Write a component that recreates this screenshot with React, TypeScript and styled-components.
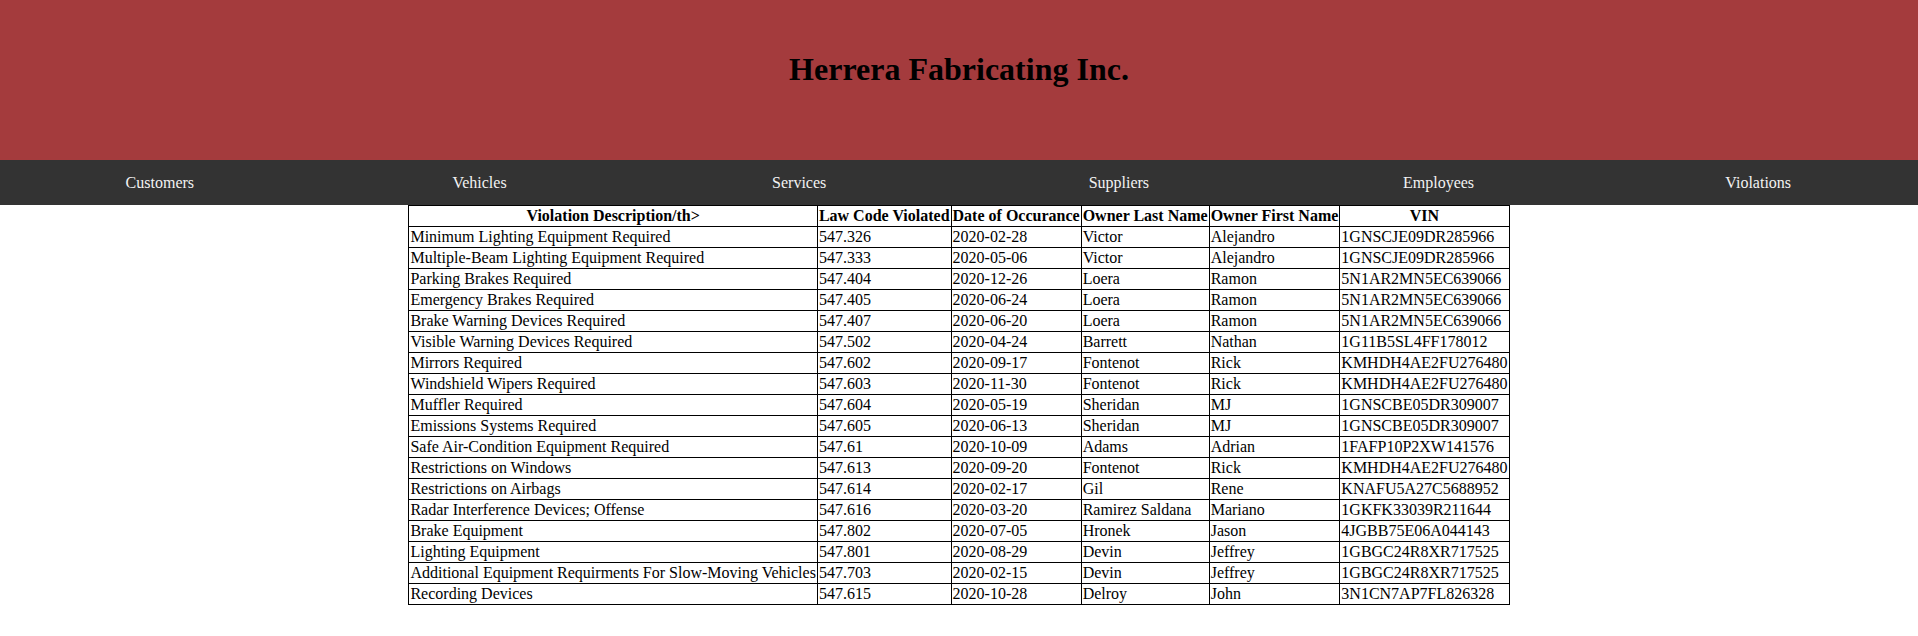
import React from "react";
import styled, { createGlobalStyle } from "styled-components";

const GlobalStyle = createGlobalStyle`
  html, body {
    margin: 0;
    padding: 0;
    background: #ffffff;
    font-family: "Liberation Serif", "Times New Roman", serif;
    font-size: 16px;
    color: #000;
  }
`;

const Header = styled.header`
  background: #a43b3d;
  height: 160px;
  box-sizing: border-box;
  padding-top: 51px;
`;

const Title = styled.h1`
  margin: 0;
  text-align: center;
  font-size: 32px;
  font-weight: bold;
  color: #000;
`;

const Nav = styled.nav`
  background: #333333;
  height: 45px;
  display: flex;
  align-items: center;
`;

const NavLink = styled.a`
  flex: 1;
  text-align: center;
  color: #f2f2f2;
  text-decoration: none;
  font-size: 16px;
`;

const Table = styled.table`
  border-collapse: collapse;
  margin: 0 auto;
  border: 1px solid #000;
`;

const Th = styled.th`
  border: 1px solid #000;
  padding: 1px;
  line-height: 18px;
  font-weight: bold;
  text-align: center;
  white-space: nowrap;
`;

const Td = styled.td`
  border: 1px solid #000;
  padding: 1px;
  line-height: 18px;
  text-align: left;
  white-space: nowrap;
`;

const navItems = ["Customers", "Vehicles", "Services", "Suppliers", "Employees", "Violations"];

const headers = [
  "Violation Description/th>",
  "Law Code Violated",
  "Date of Occurance",
  "Owner Last Name",
  "Owner First Name",
  "VIN",
];

const rows: string[][] = [
  ["Minimum Lighting Equipment Required", "547.326", "2020-02-28", "Victor", "Alejandro", "1GNSCJE09DR285966"],
  ["Multiple-Beam Lighting Equipment Required", "547.333", "2020-05-06", "Victor", "Alejandro", "1GNSCJE09DR285966"],
  ["Parking Brakes Required", "547.404", "2020-12-26", "Loera", "Ramon", "5N1AR2MN5EC639066"],
  ["Emergency Brakes Required", "547.405", "2020-06-24", "Loera", "Ramon", "5N1AR2MN5EC639066"],
  ["Brake Warning Devices Required", "547.407", "2020-06-20", "Loera", "Ramon", "5N1AR2MN5EC639066"],
  ["Visible Warning Devices Required", "547.502", "2020-04-24", "Barrett", "Nathan", "1G11B5SL4FF178012"],
  ["Mirrors Required", "547.602", "2020-09-17", "Fontenot", "Rick", "KMHDH4AE2FU276480"],
  ["Windshield Wipers Required", "547.603", "2020-11-30", "Fontenot", "Rick", "KMHDH4AE2FU276480"],
  ["Muffler Required", "547.604", "2020-05-19", "Sheridan", "MJ", "1GNSCBE05DR309007"],
  ["Emissions Systems Required", "547.605", "2020-06-13", "Sheridan", "MJ", "1GNSCBE05DR309007"],
  ["Safe Air-Condition Equipment Required", "547.61", "2020-10-09", "Adams", "Adrian", "1FAFP10P2XW141576"],
  ["Restrictions on Windows", "547.613", "2020-09-20", "Fontenot", "Rick", "KMHDH4AE2FU276480"],
  ["Restrictions on Airbags", "547.614", "2020-02-17", "Gil", "Rene", "KNAFU5A27C5688952"],
  ["Radar Interference Devices; Offense", "547.616", "2020-03-20", "Ramirez Saldana", "Mariano", "1GKFK33039R211644"],
  ["Brake Equipment", "547.802", "2020-07-05", "Hronek", "Jason", "4JGBB75E06A044143"],
  ["Lighting Equipment", "547.801", "2020-08-29", "Devin", "Jeffrey", "1GBGC24R8XR717525"],
  ["Additional Equipment Requirments For Slow-Moving Vehicles", "547.703", "2020-02-15", "Devin", "Jeffrey", "1GBGC24R8XR717525"],
  ["Recording Devices", "547.615", "2020-10-28", "Delroy", "John", "3N1CN7AP7FL826328"],
];

export default function App() {
  return (
    <>
      <GlobalStyle />
      <Header>
        <Title>Herrera Fabricating Inc.</Title>
      </Header>
      <Nav>
        {navItems.map((item) => (
          <NavLink key={item} href="#">
            {item}
          </NavLink>
        ))}
      </Nav>
      <Table>
        <thead>
          <tr>
            {headers.map((h) => (
              <Th key={h}>{h}</Th>
            ))}
          </tr>
        </thead>
        <tbody>
          {rows.map((r, i) => (
            <tr key={i}>
              {r.map((c, j) => (
                <Td key={j}>{c}</Td>
              ))}
            </tr>
          ))}
        </tbody>
      </Table>
    </>
  );
}
